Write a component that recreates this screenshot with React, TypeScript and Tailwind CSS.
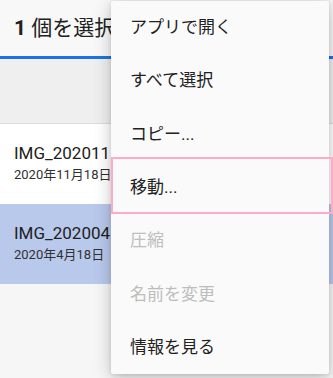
import React from "react";

const font = { fontFamily: "Roboto, 'Noto Sans CJK JP', sans-serif" };

const items: { label: string; disabled?: boolean }[] = [
  { label: "アプリで開く" },
  { label: "すべて選択" },
  { label: "コピー..." },
  { label: "移動..." },
  { label: "圧縮", disabled: true },
  { label: "名前を変更", disabled: true },
  { label: "情報を見る" },
];

export default function App() {
  return (
    <div className="relative w-[333px] h-[378px] overflow-hidden bg-[#f6f6f6]" style={font}>
      <div className="h-[56px] bg-[#f8f8f8] flex items-center pl-[14px] pt-[1px] w-[111px] overflow-hidden">
        <span className="text-[21px] text-[#212121] leading-none whitespace-nowrap">
          <span className="font-bold">1</span> 個を選択
        </span>
      </div>
      <div className="h-[3px] bg-[#1a73e8]" />
      <div className="h-[65px] bg-[#efefef] border-b border-[#dcdcdc]" />
      <div className="h-[80px] bg-white flex flex-col justify-center pl-[14px] pb-[2px]">
        <div className="w-[97px] overflow-hidden text-[17px] leading-[20px] text-[#212121] whitespace-nowrap">IMG_20201118_120000.jpg</div>
        <div className="w-[97px] overflow-hidden text-[13px] leading-[18px] text-[#303030] whitespace-nowrap mt-[3px]">2020年11月18日</div>
      </div>
      <div className="h-[80px] bg-[#b9c9ec] flex flex-col justify-center pl-[14px] pb-[2px]">
        <div className="w-[97px] overflow-hidden text-[17px] leading-[20px] text-[#212121] whitespace-nowrap">IMG_20200418_120000.jpg</div>
        <div className="w-[97px] overflow-hidden text-[13px] leading-[18px] text-[#303030] whitespace-nowrap mt-[3px]">2020年4月18日</div>
      </div>

      <div className="absolute left-[111px] top-[1px] w-[218px] bg-[#fafafa] rounded-[2px] shadow-[0_4px_18px_rgba(0,0,0,0.22),0_1px_4px_rgba(0,0,0,0.12)]">
        {items.map((it) => (
          <div
            key={it.label}
            className={`h-[53.33px] flex items-center pl-[19px] text-[17px] whitespace-nowrap ${
              it.disabled ? "text-[#bdbdbd]" : "text-[#212121]"
            }`}
          >
            {it.label}
          </div>
        ))}
      </div>
      <div className="absolute left-[111px] top-[157px] w-[222px] h-[57px] border-2 border-[#ffaac8]" />
    </div>
  );
}
